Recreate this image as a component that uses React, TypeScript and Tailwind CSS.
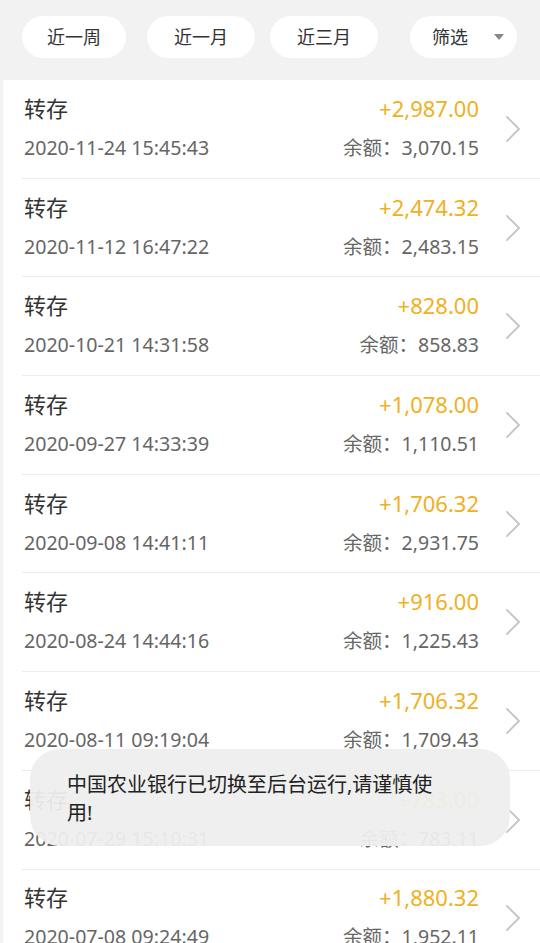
import React from "react";

const rows = [
  { amt: "+2,987.00", date: "2020-11-24 15:45:43", bal: "3,070.15" },
  { amt: "+2,474.32", date: "2020-11-12 16:47:22", bal: "2,483.15" },
  { amt: "+828.00", date: "2020-10-21 14:31:58", bal: "858.83" },
  { amt: "+1,078.00", date: "2020-09-27 14:33:39", bal: "1,110.51" },
  { amt: "+1,706.32", date: "2020-09-08 14:41:11", bal: "2,931.75" },
  { amt: "+916.00", date: "2020-08-24 14:44:16", bal: "1,225.43" },
  { amt: "+1,706.32", date: "2020-08-11 09:19:04", bal: "1,709.43" },
  { amt: "+783.00", date: "2020-07-29 15:10:31", bal: "783.11" },
  { amt: "+1,880.32", date: "2020-07-08 09:24:49", bal: "1,952.11" },
];

function Chevron() {
  return (
    <svg width="16" height="26" viewBox="0 0 16 26" fill="none">
      <path d="M2 1 L14 13 L2 25" stroke="#c4c4c4" strokeWidth="1.8" strokeLinecap="round" strokeLinejoin="round" />
    </svg>
  );
}

export default function App() {
  return (
    <div
      className="relative h-[943px] w-[540px] overflow-hidden bg-white"
      style={{ fontFamily: '"Noto Sans", "Noto Sans CJK SC", sans-serif' }}
    >
      <div className="flex h-[80px] items-start bg-[#f2f2f2] pl-[22px] pt-[16px]">
        <div className="flex h-[42px] w-[104px] items-center justify-center rounded-full bg-white text-[18px] text-[#333]">近一周</div>
        <div className="ml-[21px] flex h-[42px] w-[108px] items-center justify-center rounded-full bg-white text-[18px] text-[#333]">近一月</div>
        <div className="ml-[15px] flex h-[42px] w-[108px] items-center justify-center rounded-full bg-white text-[18px] text-[#333]">近三月</div>
        <div className="ml-[32px] flex h-[42px] w-[107px] items-center rounded-full bg-white pl-[22px] text-[18px] text-[#333]">
          <span>筛选</span>
          <svg className="ml-[26px]" width="10" height="6" viewBox="0 0 10 6">
            <path d="M0 0 L10 0 L5 6 Z" fill="#888" />
          </svg>
        </div>
      </div>
      <div className="border-l-[3px] border-[#f2f2f2]">
        {rows.map((r, i) => (
          <div key={i} className="ml-[19px] flex h-[98.7px] items-center border-b border-[#ececec] pb-[2px]">
            <div className="flex flex-1 flex-col pl-[2px]">
              <div className="text-[22px] leading-[28px] text-[#333]">转存</div>
              <div className="mt-[12px] text-[19.6px] leading-[28px] text-[#666]">{r.date}</div>
            </div>
            <div className="flex flex-col items-end">
              <div className="text-[22px] leading-[28px] text-[#efb022]">{r.amt}</div>
              <div className="mt-[12px] text-[19.5px] leading-[28px] text-[#666]">余额：{r.bal}</div>
            </div>
            <div className="ml-[26px] mr-[19px] mt-[2px] flex items-center">
              <Chevron />
            </div>
          </div>
        ))}
      </div>
      <div className="absolute left-[30px] top-[749px] h-[97px] w-[480px] rounded-[30px] bg-[#eeeeee]/95 pl-[37px] pt-[22px] text-[20px] leading-[28px] text-[#222]">
        中国农业银行已切换至后台运行,请谨慎使
        <br />
        用!
      </div>
    </div>
  );
}
